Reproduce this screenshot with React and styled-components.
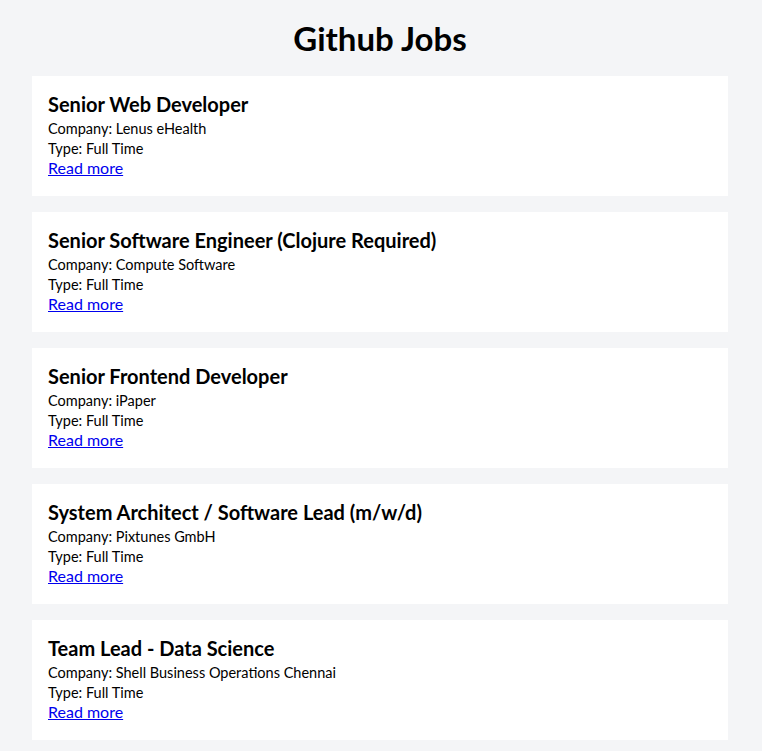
import React from 'react';
import styled, { createGlobalStyle } from 'styled-components';

const jobs = [
    { title: 'Senior Web Developer', company: 'Lenus eHealth', type: 'Full Time' },
    { title: 'Senior Software Engineer (Clojure Required)', company: 'Compute Software', type: 'Full Time' },
    { title: 'Senior Frontend Developer', company: 'iPaper', type: 'Full Time' },
    { title: 'System Architect / Software Lead (m/w/d)', company: 'Pixtunes GmbH', type: 'Full Time' },
    { title: 'Team Lead - Data Science', company: 'Shell Business Operations Chennai', type: 'Full Time' },
];

export default function App() {
    return (
        <>
        <GlobalStyle />
        <Page>
            <Heading>Github Jobs</Heading>
            <List>
                {jobs.map((job) => (
                    <Card key={job.title}>
                        <JobTitle>{job.title}</JobTitle>
                        <Line>Company: {job.company}</Line>
                        <Line>Type: {job.type}</Line>
                        <ReadMore href="#">Read more</ReadMore>
                    </Card>
                ))}
            </List>
        </Page>
        </>
    )
}

const GlobalStyle = createGlobalStyle `
    body {
        margin: 0;
        background: #f4f5f7;
        font-family: Lato, "Noto Sans", sans-serif;
        color: #000;
    }
`;
const Page = styled.div `
    padding: 16px 34px 16px 32px;
`;
const Heading = styled.h1 `
    margin: 0 0 16px;
    text-align: center;
    font-size: 33px;
    line-height: 44px;
    font-weight: 700;
`;
const List = styled.div `
    display: flex;
    flex-direction: column;
    gap: 16px;
`;
const Card = styled.div `
    background: #fff;
    padding: 15px 16px 19px;
    display: flex;
    flex-direction: column;
    align-items: flex-start;
`;
const JobTitle = styled.h3 `
    margin: 0 0 2px;
    font-size: 20px;
    line-height: 26px;
    font-weight: 700;
`;
const Line = styled.div `
    font-size: 14.5px;
    line-height: 20px;
`;
const ReadMore = styled.a `
    font-size: 16px;
    line-height: 18px;
    color: #0000ee;
`;
